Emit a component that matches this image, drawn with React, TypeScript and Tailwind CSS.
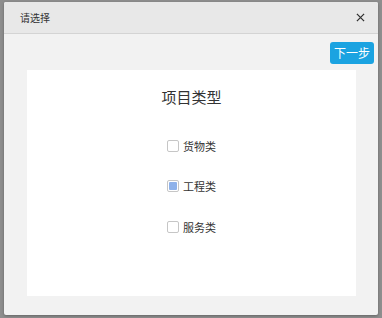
import { useState } from 'react'

const options = ['货物类', '工程类', '服务类']

export default function App() {
  const [selected, setSelected] = useState<string[]>(['工程类'])

  const toggle = (name: string) => {
    setSelected((prev) =>
      prev.includes(name) ? prev.filter((p) => p !== name) : [...prev, name]
    )
  }

  return (
    <div
      className="h-[318px] w-[382px] bg-[#8e8e8e] pt-[2px] pl-[4px]"
      style={{ fontFamily: '"Microsoft YaHei", "Noto Sans CJK SC", sans-serif' }}
    >
      <div className="flex h-[313px] w-[374px] flex-col overflow-hidden rounded-[2px] bg-[#f2f2f2] shadow-[0_1px_3px_rgba(0,0,0,0.3)]">
        <div className="flex h-[32px] items-center justify-between border-b border-[#d4d4d4] bg-[#e8e8e8] pl-[16px] pr-[13px]">
          <span className="text-[10px] text-[#333]">请选择</span>
          <button className="text-[#333]" aria-label="close">
            <svg className="h-[9px] w-[9px]" viewBox="0 0 10 10" fill="none" stroke="currentColor" strokeWidth={1.4}>
              <path d="M1 1l8 8M9 1l-8 8" />
            </svg>
          </button>
        </div>

        <div className="flex justify-end pt-[8px] pr-[4px]">
          <button className="h-[22px] rounded-[3px] bg-[#1ba3e1] px-[4px] text-[12px] text-white">
            下一步
          </button>
        </div>

        <div className="mt-[6px] ml-[23px] h-[226px] w-[329px] bg-white">
          <div className="pt-[16px] text-center text-[15px] text-[#333]">项目类型</div>
          <div className="mt-[29px] flex flex-col items-center gap-[24px]">
            {options.map((name) => {
              const on = selected.includes(name)
              return (
                <label
                  key={name}
                  className="flex cursor-pointer items-center gap-[4px] text-[11px] text-[#333]"
                  onClick={() => toggle(name)}
                >
                  <span className="flex h-[12px] w-[12px] items-center justify-center rounded-[2px] border border-[#c6c6c6] bg-white">
                    {on && <span className="h-[8px] w-[8px] rounded-[1px] bg-[#8fb2ea]" />}
                  </span>
                  {name}
                </label>
              )
            })}
          </div>
        </div>
      </div>
    </div>
  )
}
